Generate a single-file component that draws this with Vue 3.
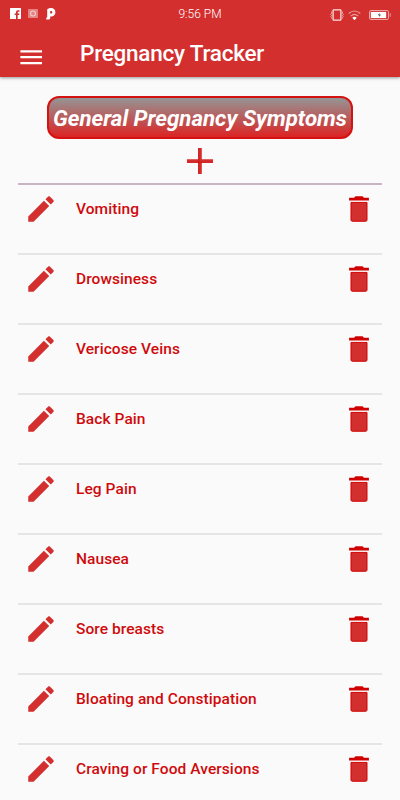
<script setup>
import { ref } from 'vue';

const pageTitle = 'Pregnancy Tracker';

const symptoms = ref([
  'Vomiting',
  'Drowsiness',
  'Vericose Veins',
  'Back Pain',
  'Leg Pain',
  'Nausea',
  'Sore breasts',
  'Bloating and Constipation',
  'Craving or Food Aversions'
]);

const removeSymptom = (index) => {
  symptoms.value.splice(index, 1);
};
</script>

<template>
  <div class="screen">
    <header class="header">
      <div class="status-bar">
        <div class="status-left">
          <svg width="11" height="11" viewBox="0 0 11 11">
            <path fill="#fff" fill-rule="evenodd" d="M.5 0h10a.5.5 0 0 1 .5.5v10a.5.5 0 0 1-.5.5H7.700V7h1.500l.2-1.500H7.700V4.600c0-.6.3-.9.9-.9h.9V2.200H8.200C6.800 2.200 6 3 6 4.300v1.200H4.600V7H6v4H.5a.5.5 0 0 1-.5-.5V.5A.5.5 0 0 1 .5 0z" />
          </svg>
          <svg class="camera" width="10" height="9" viewBox="0 0 10 9">
            <rect width="10" height="9" rx="0.500" fill="#fff" fill-opacity="0.400" />
            <circle cx="5" cy="4.500" r="2.500" fill="none" stroke="#fff" stroke-opacity="0.600" stroke-width="1.100" />
          </svg>
          <svg class="pandora" width="10" height="12" viewBox="0 0 10 12">
            <path fill="#fff" fill-rule="evenodd" d="M1.200 1.500C2 .5 3.400 0 5 0 7.800 0 9.400 1.700 9.400 4.200S7.700 8.400 5.100 8.400H4.200v1.700c0 .8-.4 1.300-1.200 1.300H.3V9.600h.9zM4.200 3.100v2.500h.9c.8 0 1.200-.5 1.200-1.300s-.4-1.200-1.200-1.200z" />
          </svg>
        </div>
        <span class="time">9:56 PM</span>
        <div class="status-right">
          <svg width="14" height="12" viewBox="0 0 14 12">
            <rect x="3.100" y="0.800" width="7.800" height="10.400" rx="0.600" fill="none" stroke="#fff" stroke-opacity="0.850" stroke-width="1.300" />
            <path d="M1.500 2.500v2l-.8 1 .8 1-.8 1 .8 1v1M12.500 2.500v2l.8 1-.8 1 .8 1-.8 1v1" fill="none" stroke="#fff" stroke-opacity="0.600" stroke-width="0.900" />
          </svg>
          <svg class="wifi" width="13" height="11" viewBox="0 0 13 11">
            <path d="M.7 3.500Q6.500-1.500 12.300 3.500M2.700 6.100Q6.500 2.700 10.300 6.100" fill="none" stroke="#fff" stroke-opacity="0.500" stroke-width="1.200" />
            <path d="M4.300 7.700Q6.500 6 8.700 7.700L6.500 10.300z" fill="#fff" />
          </svg>
          <svg class="battery" width="22" height="10" viewBox="0 0 22 10">
            <rect x="0.500" y="0.500" width="19" height="9" rx="1.500" fill="none" stroke="#fff" stroke-opacity="0.550" />
            <path d="M21.200 3.200v3.600" stroke="#fff" stroke-opacity="0.500" />
            <rect x="1.800" y="1.900" width="15.400" height="6.200" fill="#fff" />
            <path d="M10.500 3L8.800 5.200h1.500l-.2 1.900 1.900-2.400h-1.500z" fill="#444" />
          </svg>
        </div>
      </div>
      <div class="toolbar">
        <svg class="menu" width="22" height="16" viewBox="0 0 22 16">
          <path d="M.4 2.300H22M.4 8.200H22M.4 14.100H22" stroke="#fff" stroke-width="2.300" />
        </svg>
        <h1 class="title">{{ pageTitle }}</h1>
      </div>
    </header>

    <main class="content">
      <div class="badge">General Pregnancy Symptoms</div>
      <svg class="add" width="26" height="26" viewBox="0 0 26 26">
        <path d="M0 13h26M13 0v26" stroke="#d32f2f" stroke-width="3.600" />
        <path d="M0 14.300h26M11.700 0v26" stroke="#d00000" stroke-opacity="0.700" stroke-width="1" />
      </svg>
      <ul class="list">
        <li v-for="(symptom, index) in symptoms" :key="symptom" class="row">
          <svg class="edit" width="34" height="34" viewBox="0 0 24 24">
            <path d="M3 17.250V21h3.750L17.810 9.940l-3.750-3.750L3 17.250zM20.710 7.040c.39-.39.39-1.020 0-1.410l-2.340-2.340c-.39-.39-1.020-.39-1.410 0l-1.830 1.830 3.750 3.750 1.830-1.830z" />
          </svg>
          <span class="name">{{ symptom }}</span>
          <svg class="delete" width="34" height="34" viewBox="0 0 24 24" @click="removeSymptom(index)">
            <path class="bin" d="M6.350 7.350h11.300V19.800c0 .5-.4.85-.85.85H7.200c-.45 0-.85-.35-.85-.85z" />
            <path class="lid" d="M19 4h-3.500l-1-1h-5l-1 1H5v2h14V4z" />
          </svg>
        </li>
      </ul>
    </main>
  </div>
</template>

<style>
body {
  background: #fafafa;
}
</style>

<style scoped>
.screen {
  height: 800px;
  overflow: hidden;
  background: #fafafa;
  font-family: Roboto, sans-serif;
}

.header {
  height: 77px;
  background: #d32f2f;
  color: #fff;
  box-shadow: 0 1px 3px rgba(0, 0, 0, 0.4);
}

.status-bar {
  display: grid;
  grid-template-columns: 1fr auto 1fr;
  align-items: center;
  height: 28px;
  padding: 0 9px 0 10px;
}

.status-left,
.status-right {
  display: flex;
  align-items: center;
}

.status-left {
  padding-bottom: 1px;
}

.status-right {
  justify-content: flex-end;
  padding-top: 2px;
}

.camera {
  margin-left: 7px;
}

.pandora {
  margin-left: 8px;
}

.wifi {
  margin-left: 4px;
}

.battery {
  margin-left: 8px;
}

.time {
  margin-right: 1px;
  font-size: 12px;
  font-weight: 300;
  line-height: 28px;
}

.toolbar {
  display: flex;
  align-items: center;
  height: 49px;
  padding-left: 20px;
}

.menu {
  margin-top: 9px;
}

.title {
  margin: 2px 0 0 38px;
  font-size: 22.5px;
  font-weight: 500;
  letter-spacing: -0.22px;
  line-height: 49px;
  white-space: nowrap;
}

.content {
  display: flex;
  flex-direction: column;
  align-items: center;
  padding: 19px 18px 0;
}

.badge {
  box-sizing: border-box;
  width: 306px;
  height: 43px;
  border: 2px solid #d51212;
  border-radius: 12px;
  background: linear-gradient(#959595, #dc2424);
  color: #fff;
  font-size: 22.3px;
  font-style: italic;
  font-weight: 700;
  line-height: 41px;
  text-align: center;
  white-space: nowrap;
}

.add {
  margin-top: 9px;
}

.list {
  width: 100%;
  margin: 9px 0 0;
  padding: 0;
  list-style: none;
}

.row {
  display: flex;
  align-items: center;
  box-sizing: border-box;
  height: 70px;
  padding: 0 6px 20px 6px;
  border-top: 2px solid #e5e5e5;
}

.row:first-child {
  border-top-color: #c9b5c2;
}

.edit,
.delete {
  margin-bottom: 1px;
}

.edit {
  fill: #d32f2f;
}

.name {
  flex: 1;
  margin-left: 18px;
  color: #cf0a0d;
  font-size: 15.5px;
  font-weight: 500;
  letter-spacing: 0.07px;
  line-height: 20px;
}

.bin {
  fill: #d32f2f;
  stroke: #d00000;
  stroke-width: 0.7;
}

.lid {
  fill: #d00000;
}
</style>
